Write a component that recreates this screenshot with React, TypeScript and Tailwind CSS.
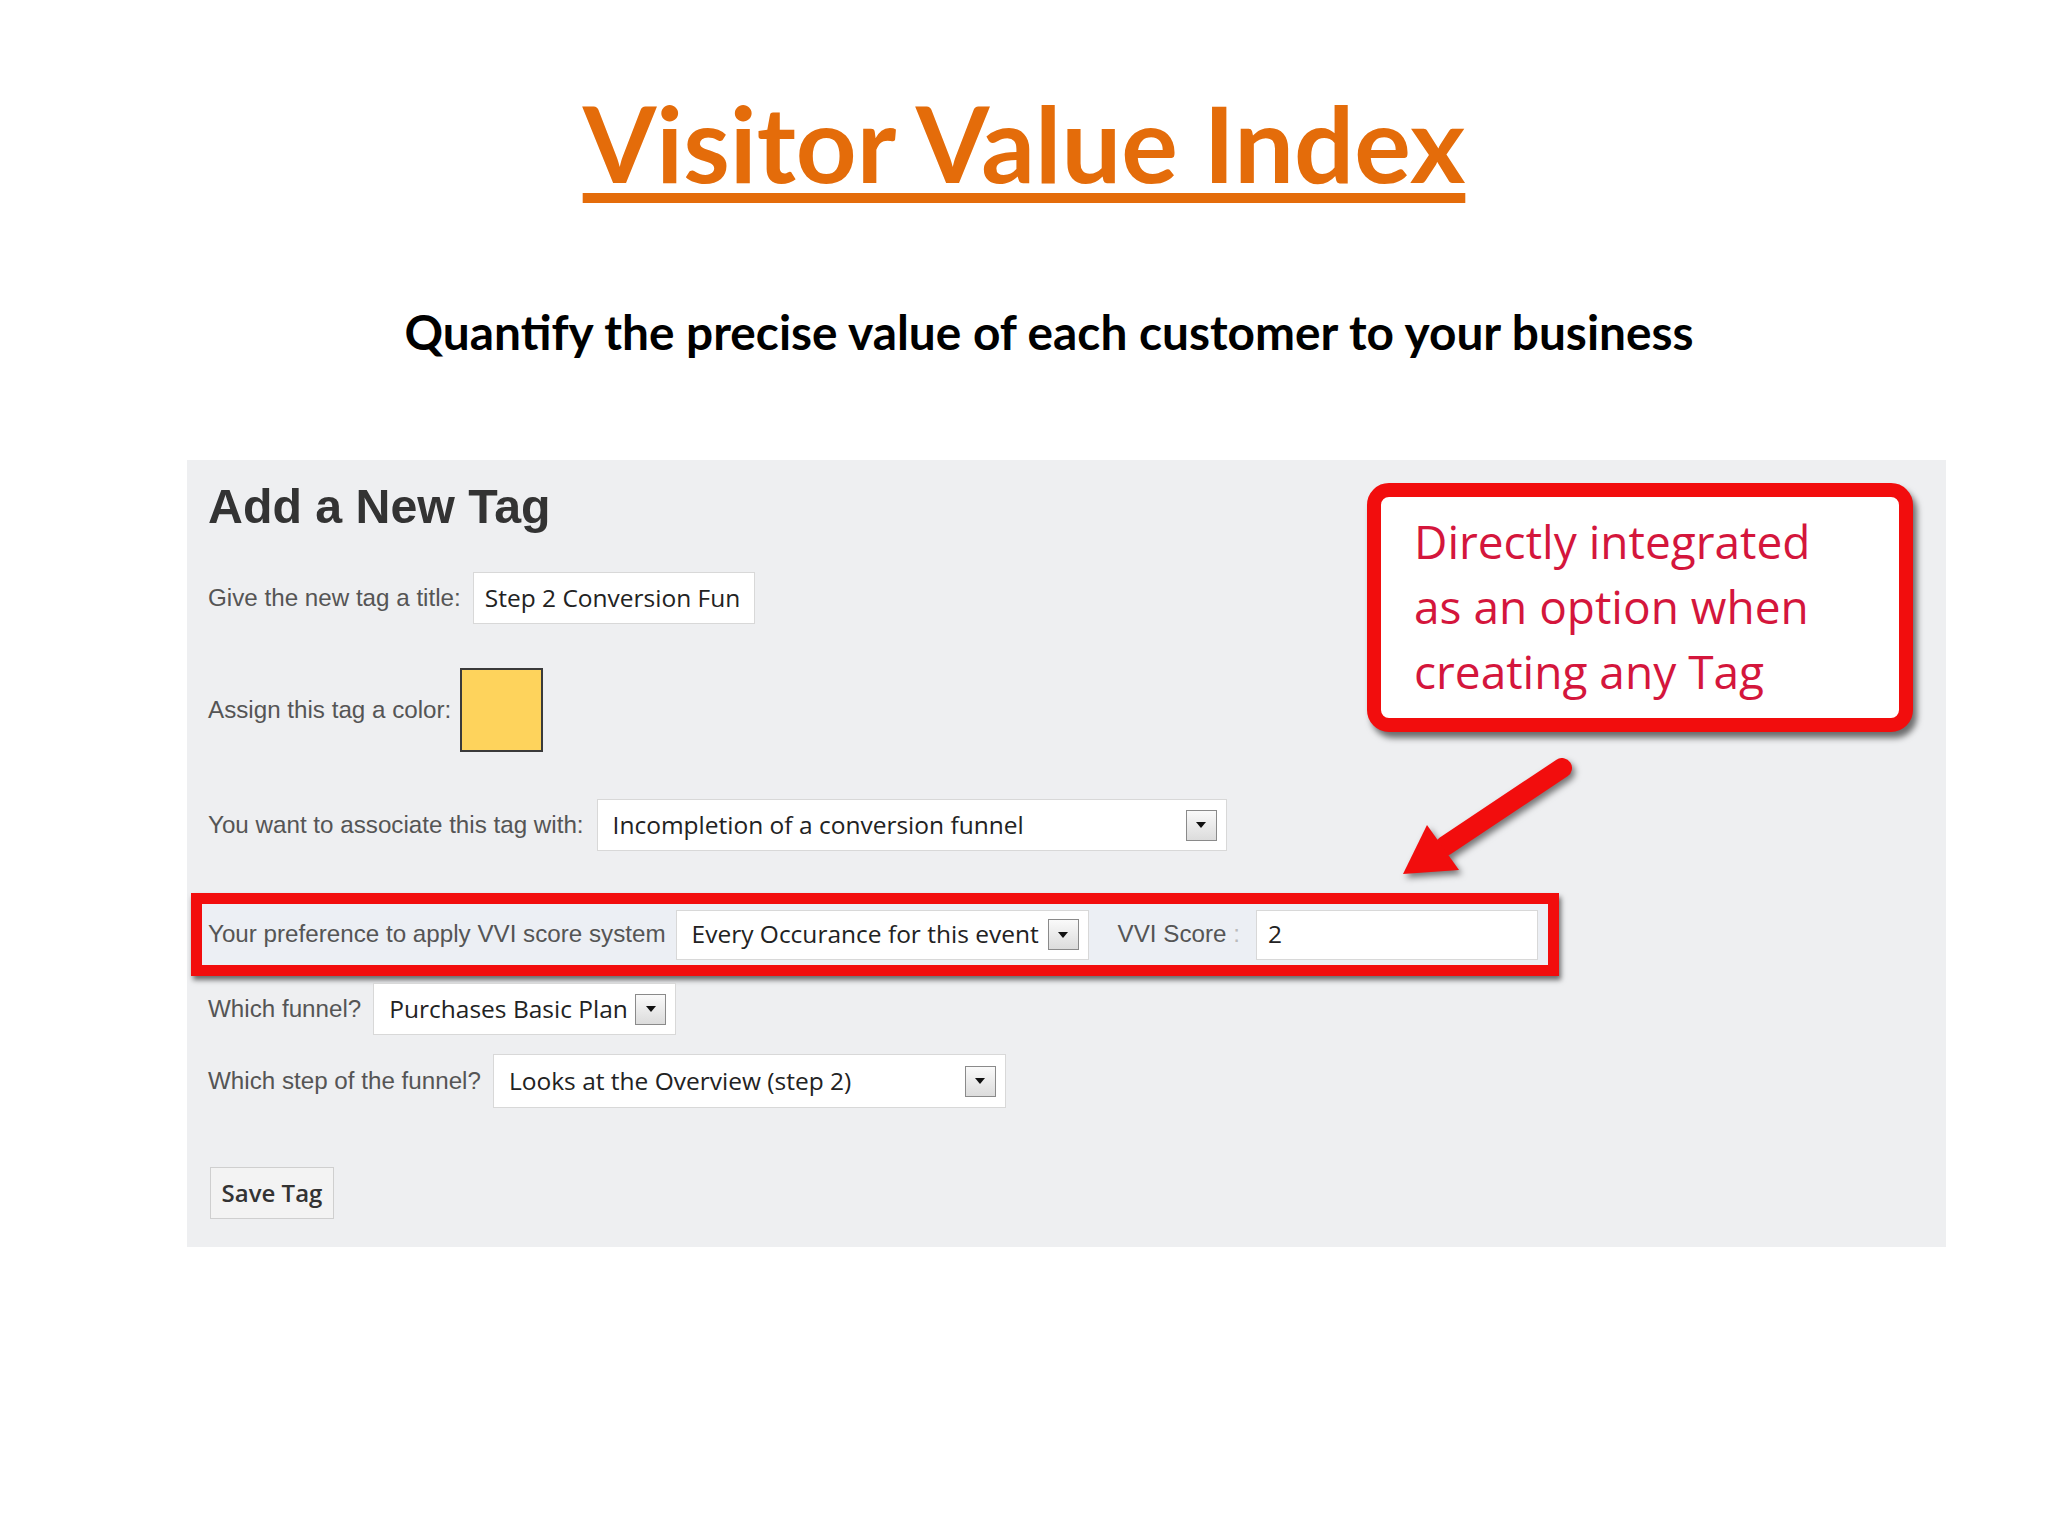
const label = "text-[24.2px] text-[#555555] whitespace-nowrap";
const field = "text-[24.5px] text-[#222222] whitespace-nowrap";
const fieldFont = { fontFamily: '"Open Sans", "Noto Sans", sans-serif' };

function DropButton() {
  return (
    <div className="w-[31px] h-[31px] border border-[#8a8a8a] bg-gradient-to-b from-[#fafafa] to-[#dcdcdc] flex items-center justify-center shrink-0">
      <svg width="12" height="8" viewBox="0 0 12 8">
        <path d="M1 1h10L6 7z" fill="#111" />
      </svg>
    </div>
  );
}

function Select({ text, width, height = 52 }: { text: string; width: number; height?: number }) {
  return (
    <div
      className="bg-white border border-[#d8d8d8] flex items-center justify-between pl-[15px] pr-[9px] shrink-0"
      style={{ width, height }}
    >
      <span className={field} style={fieldFont}>{text}</span>
      <DropButton />
    </div>
  );
}

export default function App() {
  return (
    <div
      className="w-[2048px] h-[1536px] bg-white flex flex-col overflow-hidden"
      style={{ fontFamily: '"Liberation Sans", Arial, sans-serif' }}
    >
      {/* Titles */}
      <div className="flex flex-col items-center" style={{ fontFamily: 'Lato, "Open Sans", sans-serif' }}>
        <h1 className="mt-[89px] text-[106px] leading-none font-bold text-[#e46c0a] underline decoration-[10px] underline-offset-[10px]">
          Visitor Value Index
        </h1>
        <p className="mt-[113px] pl-[50px] text-[47.8px] leading-none font-bold text-black">
          Quantify the precise value of each customer to your business
        </p>
      </div>

      {/* Screenshot panel */}
      <div className="relative mt-[104px] ml-[187px] w-[1759px] h-[787px] bg-[#eeeff1] pl-[21px] pt-[22px] flex flex-col">
        <h2 className="text-[48.3px] leading-none font-bold text-[#333333]">Add a New Tag</h2>

        <div className="mt-[42px] flex items-center gap-3 h-[52px]">
          <span className={label}>Give the new tag a title:</span>
          <div className="w-[282px] h-[52px] bg-white border border-[#d8d8d8] flex items-center pl-[11px]">
            <span className={field} style={fieldFont}>Step 2 Conversion Fun</span>
          </div>
        </div>

        <div className="mt-[44px] flex items-center gap-[9px] h-[84px]">
          <span className={label}>Assign this tag a color:</span>
          <div className="w-[83px] h-[84px] bg-[#fed35c] border-2 border-[#3a3a3a]" />
        </div>

        <div className="mt-[47px] flex items-center gap-[13px] h-[52px]">
          <span className={label}>You want to associate this tag with:</span>
          <Select text="Incompletion of a conversion funnel" width={630} />
        </div>

        {/* Highlighted row */}
        <div className="mt-[42px] -ml-[17px] w-[1368px] h-[83px] border-[11px] border-[#f20d0d] shadow-[2px_4px_5px_rgba(0,0,0,0.55)] bg-[#eceff4] flex items-center pl-[6px] pr-[10px]">
          <span className={label}>Your preference to apply VVI score system</span>
          <div className="ml-[10px]">
            <Select text="Every Occurance for this event" width={413} height={50} />
          </div>
          <span className={label + " ml-[29px]"}>VVI Score <span className="text-[#bbbbbb]">:</span></span>
          <div className="ml-auto w-[282px] h-[50px] bg-white border border-[#d8d8d8] flex items-center pl-[11px]">
            <span className={field} style={fieldFont}>2</span>
          </div>
        </div>

        <div className="mt-[7px] flex items-center gap-3 h-[52px]">
          <span className={label}>Which funnel?</span>
          <Select text="Purchases Basic Plan" width={303} />
        </div>

        <div className="mt-[19px] flex items-center gap-3 h-[54px]">
          <span className={label}>Which step of the funnel?</span>
          <Select text="Looks at the Overview (step 2)" width={513} height={54} />
        </div>

        <div className="mt-[59px] ml-[2px]">
          <button
            className="w-[124px] h-[52px] bg-[#f3f3f3] border border-[#cfcfcf] text-[24px] font-semibold text-[#333333]"
            style={fieldFont}
          >
            Save Tag
          </button>
        </div>

        {/* Callout */}
        <div className="absolute left-[1180px] top-[23px] w-[546px] h-[249px] rounded-[22px] border-[14px] border-[#f20d0d] bg-white shadow-[4px_6px_6px_rgba(0,0,0,0.55)] pl-[33px] pt-[12px]">
          <p
            className="text-[46px] leading-[65px] text-[#d4163c]"
            style={{ fontFamily: '"Open Sans", "Noto Sans", sans-serif' }}
          >
            Directly integrated
            <br />
            as an option when
            <br />
            creating any Tag
          </p>
        </div>

        {/* Arrow */}
        <svg
          className="absolute left-[1200px] top-[290px] drop-shadow-[3px_4px_3px_rgba(0,0,0,0.5)]"
          width="200"
          height="140"
          viewBox="0 0 200 140"
        >
          <line x1="175" y1="18" x2="58" y2="96" stroke="#f20d0d" strokeWidth="20" strokeLinecap="round" />
          <polygon points="72,120 16,124 40,75" fill="#f20d0d" />
        </svg>
      </div>
    </div>
  );
}
